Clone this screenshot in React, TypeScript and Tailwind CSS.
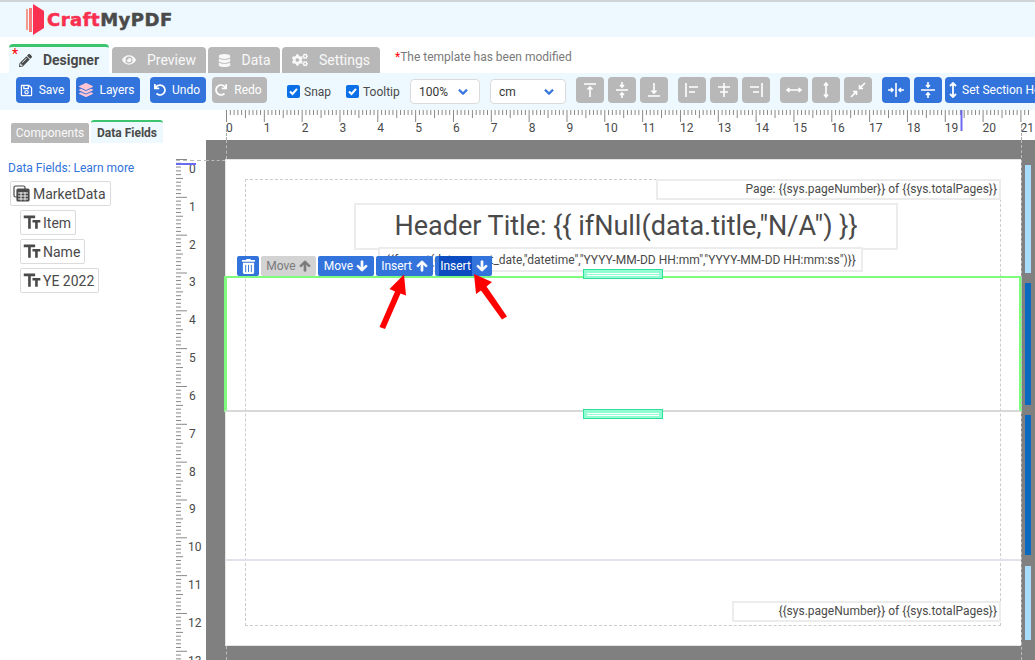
import React from "react";
import { FaArrowDown, FaArrowUp, FaChevronDown, FaCogs, FaDatabase, FaEye, FaLayerGroup, FaPencilAlt, FaRedo, FaRegSave, FaTrashAlt, FaUndo } from "react-icons/fa";
import { MdFormatSize } from "react-icons/md";

const PX = 37.83;

function HRuler() {
  const ticks = [];
  for (let i = 0; i <= 212; i++) {
    const x = 0.5 + (i * PX) / 10;
    const h = i % 10 === 0 ? 12 : i % 5 === 0 ? 8 : 5;
    ticks.push(<line key={i} x1={x} x2={x} y1={0} y2={h} stroke="#888" strokeWidth="1" />);
  }
  return (
    <svg width="809" height="30" className="block">
      {ticks}
      {Array.from({ length: 22 }, (_, i) => (
        <text key={i} x={i * PX} y={22} fontSize="12" fontFamily="Roboto, sans-serif" fill="#4a4a4a">{i}</text>
      ))}
      <line x1="735.5" x2="735.5" y1="0" y2="21" stroke="#6a6af0" strokeWidth="2" />
    </svg>
  );
}

function VRuler() {
  const ticks = [];
  for (let i = 0; i <= 135; i++) {
    const y = 19.5 + (i * PX) / 10;
    const w = i % 10 === 0 ? 11 : i % 5 === 0 ? 7 : 5;
    ticks.push(<line key={i} x1={0} x2={w} y1={y} y2={y} stroke="#888" strokeWidth="1" />);
  }
  return (
    <svg width="30" height="520" className="block shrink-0">
      {ticks}
      {Array.from({ length: 14 }, (_, i) => (
        <text key={i} x={i >= 10 ? 12 : 13} y={33 + i * PX} fontSize="12" fontFamily="Roboto, sans-serif" fill="#4a4a4a">{i}</text>
      ))}
      <line x1="0" x2="20" y1="24" y2="24" stroke="#6a6af0" strokeWidth="2" />
      <line x1="0" x2="30" y1="20.500" y2="20.500" stroke="#bbb" strokeWidth="1" strokeDasharray="4 3" />
    </svg>
  );
}

function Tab({ icon, label, w }: { icon: React.ReactNode; label: string; w: string }) {
  return (
    <div className={`${w} h-[26px] rounded-t bg-[#b8b8b8] text-white/90 text-[14px] flex items-center justify-center gap-[11px]`}>
      {icon}
      <span>{label}</span>
    </div>
  );
}

function Btn({ w, gray, icon, label }: { w: string; gray?: boolean; icon: React.ReactNode; label: string }) {
  return (
    <div className={`${w} h-[26px] rounded-[4px] ${gray ? "bg-[#b8b8b8]" : "bg-[#3273dc]"} text-white text-[12px] flex items-center justify-center gap-[6px] pr-[2px]`}>
      {icon}
      <span>{label}</span>
    </div>
  );
}

function Check({ label, w }: { label: string; w: string }) {
  return (
    <div className={`${w} h-[28px] flex items-center gap-[4px] text-[12px] text-[#4a4a4a]`}>
      <span className="w-[13px] h-[13px] rounded-[2px] bg-[#0b6fe8] flex items-center justify-center">
        <svg width="11" height="11" viewBox="0 0 11 11"><path d="M2 5.500 L4.500 8 L9 2.800" stroke="#fff" strokeWidth="2" fill="none" /></svg>
      </span>
      <span className="pt-[1px]">{label}</span>
    </div>
  );
}

function Select({ w, label }: { w: string; label: string }) {
  return (
    <div className={`${w} h-[25px] mt-[2px] rounded-[4px] bg-white border border-[#dbdbdb] flex items-center justify-between pl-[8px] pr-[11px] text-[12px] text-[#363636]`}>
      <span>{label}</span>
      <FaChevronDown className="text-[#3273dc] text-[10px]" stroke="currentColor" strokeWidth={40} />
    </div>
  );
}

function IconBtn({ gray, d }: { gray?: boolean; d: string }) {
  return (
    <div className={`w-[28px] h-[26px] shrink-0 rounded-[4px] ${gray ? "bg-[#b8b8b8]" : "bg-[#3273dc]"} flex items-center justify-center`}>
      <svg width="20" height="20" viewBox="0 0 20 20" fill="none" stroke="#fff" strokeWidth="1.600">
        <path d={d} />
      </svg>
    </div>
  );
}

function Field({ w, icon, label, gap }: { w: string; icon: React.ReactNode; label: string; gap: string }) {
  return (
    <div className={`${w} h-[25px] rounded-[2px] border border-[#dbdbdb] bg-white flex items-center pl-[2px] ${gap} text-[14px] text-[#4a4a4a]`}>
      {icon}
      <span className="pt-[1px]">{label}</span>
    </div>
  );
}

function TableIcon() {
  return (
    <svg width="17" height="17" viewBox="0 0 17 17" fill="none" stroke="#4a4a4a" strokeWidth="1.200">
      <rect x="1" y="1" width="11" height="11" rx="1.500" />
      <rect x="4" y="4" width="12" height="12" rx="1" fill="#4a4a4a" />
      <path d="M5 8h10M5 11h10M5 14h10M8 7v8.500M12 7v8.500" stroke="#fff" strokeWidth="0.900" />
    </svg>
  );
}

function Handle({ top }: { top: string }) {
  return (
    <div className={`absolute left-[357px] ${top} w-[80px] h-[10px] bg-[#90fdd2] border border-[#2ee09a] flex flex-col justify-center gap-[1px] px-[3px] z-10`}>
      <div className="h-px bg-white" />
      <div className="h-px bg-white" />
    </div>
  );
}

function SecBtn({ left, w, gray, label, up, hl, gap }: { left: string; w: string; gray?: boolean; label: string; up: boolean; hl?: boolean; gap: string }) {
  return (
    <div className={`absolute top-[96px] ${left} ${w} h-[20px] rounded-[2px] ${gray ? "bg-[#d3d3d3] text-[#7a7a7a]" : "bg-[#3273dc] text-white"} text-[12px] flex items-center justify-center ${gap} z-20`}>
      <span className={hl ? "bg-[#0b4cc0] px-[1px] leading-[20px]" : ""}>{label}</span>
      {up ? <FaArrowUp className="text-[12px]" stroke="currentColor" strokeWidth={36} /> : <FaArrowDown className="text-[12px]" stroke="currentColor" strokeWidth={36} />}
    </div>
  );
}

const Tt = <MdFormatSize className="text-[21px] -mx-[1px] -scale-x-100 shrink-0" />;

export default function App() {
  return (
    <div className="w-[1035px] h-[660px] overflow-hidden bg-white flex flex-col text-[#4a4a4a]" style={{ fontFamily: "Roboto, sans-serif" }}>
      <header className="h-[37px] shrink-0 border-t-2 border-[#d0d4d6] bg-[#edf9fe] flex items-center pl-[25px]">
        <svg width="22" height="32" viewBox="0 0 22 32" className="shrink-0">
          <rect x="1" y="5" width="2" height="21" fill="#f59a8e" />
          <rect x="4" y="4" width="3" height="24" fill="#fb7b7b" />
          <path d="M8 0 L19 7 L19 24 L8 31 Z" fill="#f9304f" />
        </svg>
        <div className="text-[18px] font-bold tracking-[0.5px] leading-none [-webkit-text-stroke:0.5px] mt-[1px]" style={{ fontFamily: "'DejaVu Sans', sans-serif" }}>
          <span className="text-[#f9304f]">Craft</span><span className="text-[#4a4a4a]">MyPDF</span>
        </div>
      </header>

      <div className="h-[36px] shrink-0 flex items-end pl-[9px] gap-[2px] relative">
        <div className="w-[100px] h-[29px] rounded-t border-t-[3px] border-[#3cc46e] bg-[#edf9fe] flex items-center justify-center gap-[11px] pr-[2px] text-[14px] font-bold text-[#4a4a4a] mr-[1px] relative">
          <span className="absolute left-[3px] top-[0px] text-[#f00] text-[14px] font-normal leading-none">*</span>
          <FaPencilAlt className="text-[13px] ml-[2px]" />
          <span>Designer</span>
        </div>
        <Tab w="w-[94px]" label="Preview" icon={<FaEye className="text-[14px]" />} />
        <Tab w="w-[72px]" label="Data" icon={<FaDatabase className="text-[13px]" />} />
        <Tab w="w-[98px]" label="Settings" icon={<FaCogs className="text-[16px]" />} />
        <div className="self-center ml-[13px] text-[12px] text-[#7a7a7a] mt-[3px]"><span className="text-[#f00]">*</span>The template has been modified</div>
      </div>

      <div className="h-[37px] shrink-0 bg-[#edf9fe] flex pl-[16px] pt-[4px] overflow-hidden">
        <Btn w="w-[54px] shrink-0" label="Save" icon={<FaRegSave className="text-[13px]" />} />
        <div className="w-[6px] shrink-0" />
        <Btn w="w-[64px] shrink-0" label="Layers" icon={<FaLayerGroup className="text-[14px] text-[#ffc4d2]" />} />
        <div className="w-[10px] shrink-0" />
        <Btn w="w-[56px] shrink-0" label="Undo" icon={<FaUndo className="text-[12px]" />} />
        <div className="w-[6px] shrink-0" />
        <Btn w="w-[55px] shrink-0" gray label="Redo" icon={<FaRedo className="text-[12px] mr-[1px]" />} />
        <div className="w-[20px] shrink-0" />
        <Check w="w-[59px] shrink-0" label="Snap" />
        <Check w="w-[64px] shrink-0" label="Tooltip" />
        <Select w="w-[70px] shrink-0 mr-[10px]" label="100%" />
        <Select w="w-[76px] shrink-0 mr-[10px]" label="cm" />
        <div className="flex gap-[4px] shrink-0 mr-[10px]">
          <IconBtn gray d="M4 4h12M10 17V7M7.500 9.500 10 7l2.500 2.500" />
          <IconBtn gray d="M4 10h12M10 2v5M8 5l2 2 2-2M10 18v-5M8 15l2-2 2 2" />
          <IconBtn gray d="M4 16h12M10 3v10M7.500 10.500 10 13l2.500-2.500" />
        </div>
        <div className="flex gap-[4px] shrink-0 mr-[10px]">
          <IconBtn gray d="M4 3v14M7 7h9M7 12h6" />
          <IconBtn gray d="M10 3v14M4 7h12M6 12h8" />
          <IconBtn gray d="M16 3v14M4 7h9M7 12h6" />
        </div>
        <div className="flex gap-[4px] shrink-0 mr-[10px]">
          <IconBtn gray d="M3 10h14M5.500 8 3 10l2.500 2M14.500 8 17 10l-2.500 2" />
          <IconBtn gray d="M10 3v14M8 5.500 10 3l2 2.500M8 14.500 10 17l2-2.500" />
          <IconBtn gray d="M3 17l5.500-5.500M5 11.500h3.500V15M17 3l-5.500 5.500M15 8.500h-3.500V5" />
        </div>
        <div className="flex gap-[4px] shrink-0">
          <IconBtn d="M10 3v14M2 10h5M5 8l2 2-2 2M18 10h-5M15 8l-2 2 2 2" />
          <IconBtn d="M3 10h14M10 2v5M8 5l2 2 2-2M10 18v-5M8 15l2-2 2 2" />
          <div className="w-[200px] h-[26px] -ml-[1px] shrink-0 rounded-[4px] bg-[#3273dc] text-white text-[12px] flex items-center pl-[1px] gap-[2px] whitespace-nowrap">
            <svg width="14" height="18" viewBox="0 0 14 18" fill="none" stroke="#fff" strokeWidth="1.800"><path d="M7 2v14M4 5l3-3 3 3M4 13l3 3 3-3" /></svg>
            <span>Set Section Height</span>
          </div>
        </div>
      </div>

      <div className="flex-1 flex min-h-0">
        <aside className="w-[176px] shrink-0">
          <div className="h-[33px] pl-[11px] flex items-end gap-[2px] text-[12px]">
            <div className="w-[78px] h-[20px] rounded-t-[2px] bg-[#b8b8b8] text-white/90 flex items-center justify-center">Components</div>
            <div className="w-[72px] h-[23px] rounded-t-[3px] border-t-2 border-[#3cc46e] bg-[#edf9fe] font-bold flex items-center justify-center">Data Fields</div>
          </div>
          <div className="pl-[8px] pt-[18px] text-[12px] text-[#3273dc] leading-[15px]">Data Fields: Learn more</div>
          <div className="pl-[10px] pt-[5px] flex flex-col gap-[4px]">
            <Field w="w-[101px]" gap="gap-[3px]" label="MarketData" icon={<TableIcon />} />
            <div className="pl-[10px] flex flex-col gap-[4px]">
              <Field w="w-[56px]" gap="gap-[1px]" label="Item" icon={Tt} />
              <Field w="w-[65px]" gap="gap-[1px]" label="Name" icon={Tt} />
              <Field w="w-[79px]" gap="gap-[1px]" label="YE 2022" icon={Tt} />
            </div>
          </div>
        </aside>

        <div className="flex-1 flex flex-col min-w-0">
          <div className="h-[30px] shrink-0 pl-[50px] relative">
            <HRuler />
            <div className="absolute left-[50px] top-[15px] h-[15px] border-l border-dashed border-[#aaa]" />
            <div className="absolute left-[845px] top-[15px] h-[15px] border-l border-dashed border-[#aaa]" />
          </div>
          <div className="flex-1 flex min-h-0">
            <VRuler />
            <div className="flex-1 bg-[#808080] pl-[19px] pt-[19px] relative overflow-hidden">
              <div className="absolute left-[20px] top-0 h-[19px] border-l border-dashed border-[#bbb]" />
              <div className="absolute left-0 top-[20px] w-[19px] border-t border-dashed border-[#bbb]" />
              <div className="absolute left-[20px] top-[506px] h-[14px] border-l border-dashed border-[#bbb]" />
              <div className="absolute left-[815px] top-0 h-[520px] border-l border-dashed border-[#bbb] z-30" />
              <div className="absolute left-[819px] top-[25px] w-[6px] h-[108px] bg-[#a8dcfb]" />
              <div className="absolute left-[819px] top-[143px] w-[6px] h-[122px] bg-[#0a6ac0]" />
              <div className="absolute left-[819px] top-[275px] w-[6px] h-[140px] bg-[#0a6ac0]" />
              <div className="absolute left-[819px] top-[426px] w-[6px] h-[74px] bg-[#a8dcfb]" />

              <div className="w-[796px] h-[487px] bg-white border-t border-l border-b border-[#e5e5e5] relative text-[#4a4a4a]">
                <div className="absolute left-[19px] top-[19px] w-[756px] h-[447px] border border-dashed border-[#ccc]" />
                <div className="absolute left-[430px] top-[19px] w-[345px] h-[21px] border-2 border-[#ececec] text-[12px] text-right pr-[2px] leading-[17px] whitespace-nowrap">Page: {"{{sys.pageNumber}}"} of {"{{sys.totalPages}}"}</div>
                <div className="absolute left-[128px] top-[43px] w-[544px] h-[47px] border-2 border-[#ececec] text-[27px] text-center leading-[43px] whitespace-nowrap">Header Title: {'{{ ifNull(data.title,"N/A") }}'}</div>
                <div className="absolute left-[152px] top-[87px] w-[485px] h-[25px] border-2 border-[#ececec] text-[12px] pl-[6px] leading-[22px] whitespace-nowrap bg-white">{'{{format(data.report_date,"datetime","YYYY-MM-DD HH:mm","YYYY-MM-DD HH:mm:ss")}}'}</div>

                <div className="absolute -left-[2px] top-[116px] w-[798px] h-[136px] border-y-[2px] border-x-[3px] border-[#7dfc7d] border-b-[#d8d8d8]" />
                <Handle top="top-[109px]" />
                <Handle top="top-[249px]" />
                <div className="absolute left-0 top-[399px] w-[795px] h-[2px] bg-[#e2e2ea]" />

                <div className="absolute left-[11px] top-[96px] w-[22px] h-[20px] rounded-[2px] bg-[#3273dc] text-white flex items-center justify-center z-20"><FaTrashAlt className="text-[15px]" /></div>
                <SecBtn left="left-[35px]" w="w-[55px]" gap="gap-[3px]" gray label="Move" up />
                <SecBtn left="left-[92px]" w="w-[56px]" gap="gap-[3px]" label="Move" up={false} />
                <SecBtn left="left-[150px]" w="w-[57px]" gap="gap-[4px]" label="Insert" up />
                <SecBtn left="left-[209px]" w="w-[57px]" gap="gap-[4px]" label="Insert" up={false} hl />

                <svg width="796" height="487" className="absolute left-0 top-0 z-30 pointer-events-none">
                  <path d="M153.500 167 L169 131.500 L163.500 129 L178 114.500 L180 135.500 L174.500 133.500 L159 169 Z" fill="#f00" />
                  <path d="M276 159.500 L255 130.500 L250 134 L248 114 L266 122 L260.500 126.500 L281 156.500 Z" fill="#f00" />
                </svg>

                <div className="absolute left-[506px] top-[441px] w-[269px] h-[21px] border-2 border-[#ececec] text-[12px] text-right pr-[2px] leading-[17px] whitespace-nowrap">{"{{sys.pageNumber}}"} of {"{{sys.totalPages}}"}</div>
              </div>
            </div>
          </div>
        </div>
      </div>
    </div>
  );
}
